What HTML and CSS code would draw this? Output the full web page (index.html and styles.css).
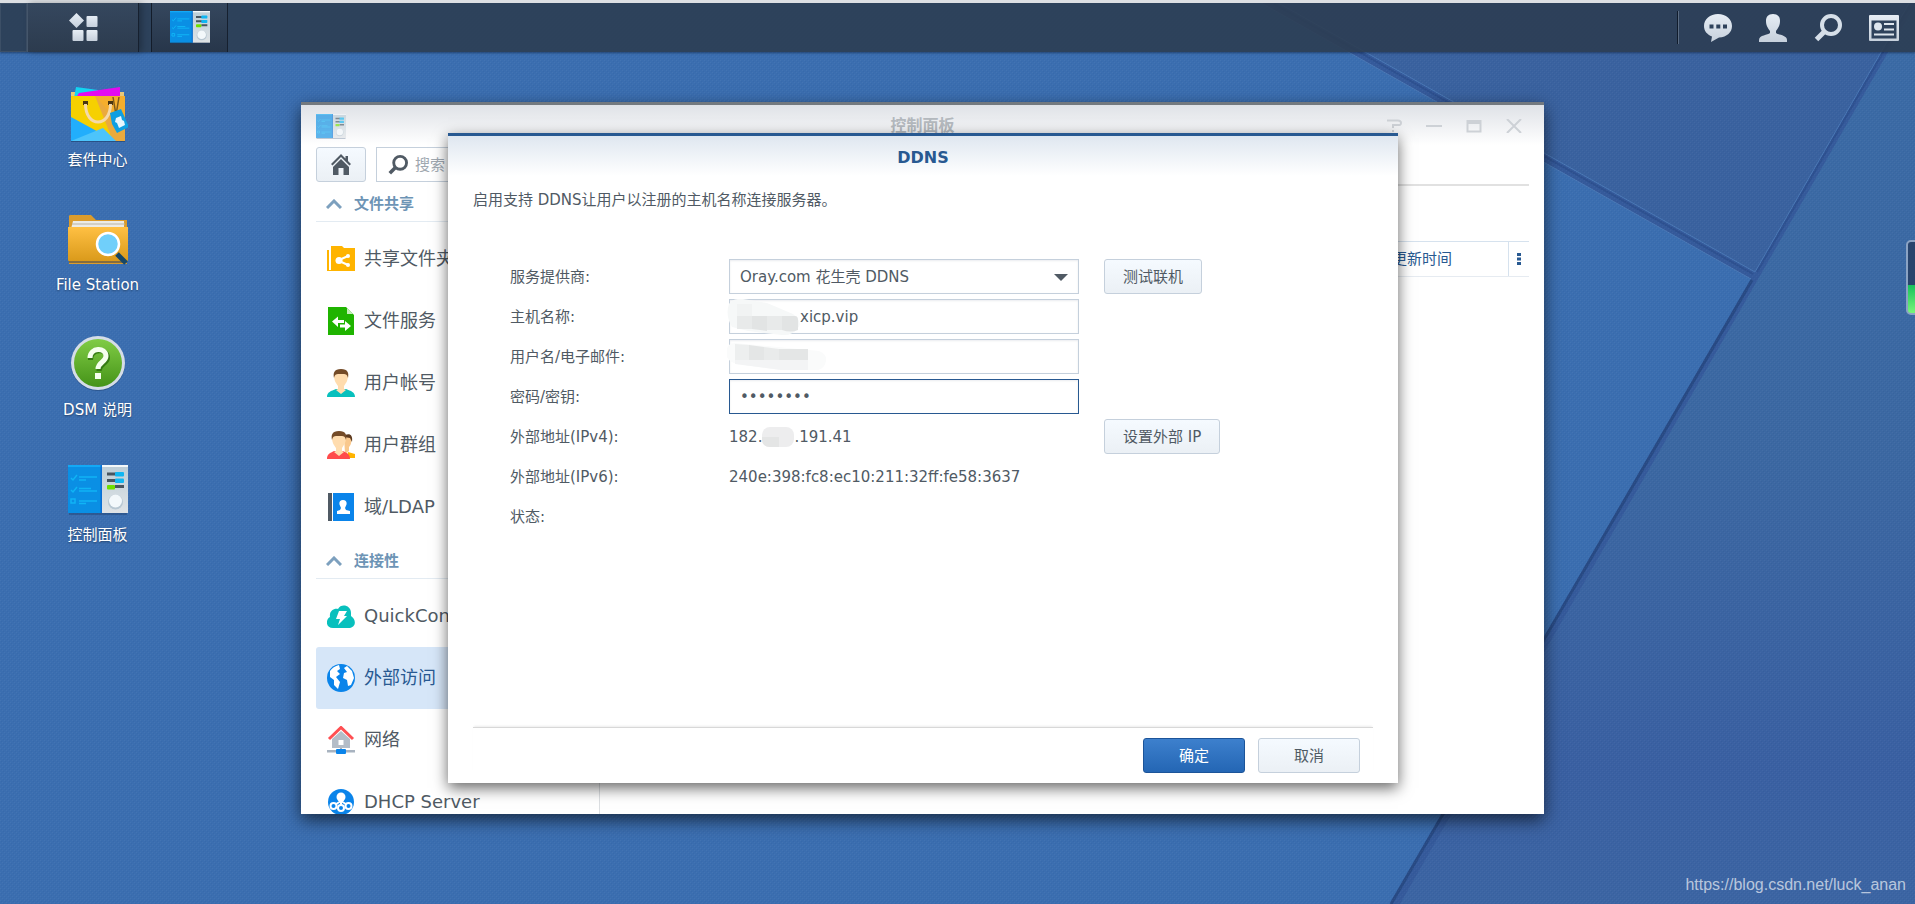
FILE: index.html
```
<!DOCTYPE html>
<html lang="zh-CN">
<head>
<meta charset="UTF-8">
<meta name="viewport" content="width=device-width, initial-scale=1.0">
<title>DDNS</title>
<link rel="stylesheet" href="styles.css">
</head>
<body>

<svg class="wallpaper" viewBox="0 0 1915 904" preserveAspectRatio="xMaxYMin slice" aria-hidden="true">
    <defs>
        <pattern id="weave" width="4" height="4" patternUnits="userSpaceOnUse">
            <path d="M0 0h1v1H0zM2 2h1v1H2z" fill="#fff" opacity=".04"/>
            <path d="M1 1h1v1H1zM3 3h1v1H3z" fill="#001c50" opacity=".06"/>
        </pattern>
        <linearGradient id="right" x1="0" y1="0" x2="0" y2="1">
            <stop offset="0" stop-color="#3b6ba6"/>
            <stop offset=".5" stop-color="#3c68a2"/>
            <stop offset=".85" stop-color="#3a60a2"/>
            <stop offset="1" stop-color="#3c65a3"/>
        </linearGradient>
    </defs>
    <rect width="1915" height="904" fill="#355a9b"/>
    <path d="M0 0H1256L1751 279L1390 904H0z" fill="#3b6eb0"/>
    <path d="M1273 0H1911L1755 272z" fill="#3a629f"/>
    <path d="M1918 0L1400 904H1915V0z" fill="url(#right)"/>
    <path d="M1256 0L1751 279M1273 0L1755 272L1911 0" fill="none" stroke="#4a78b5" stroke-width="1"/>
    <path d="M1277 0L1756 270" fill="none" stroke="#2e5190" stroke-width="2" transform="translate(-3,4)"/>
    <path d="M1752 280L1391 904" fill="none" stroke="#284a84" stroke-width="3"/>
    <path d="M1913 0L1757 272" fill="none" stroke="#2e5190" stroke-width="2"/>
    <rect width="1915" height="904" fill="url(#weave)"/>
</svg>

<!-- shared drawings -->
<svg class="defs" aria-hidden="true">
    <defs>
        <linearGradient id="panelGrey" x1="0" y1="0" x2="0" y2="1">
            <stop offset="0" stop-color="#bccdd7"/><stop offset="1" stop-color="#dfe3e6"/>
        </linearGradient>
        <linearGradient id="folderFront" x1="0" y1="0" x2="0" y2="1">
            <stop offset="0" stop-color="#ffc043"/><stop offset="1" stop-color="#da9a1b"/>
        </linearGradient>
        <linearGradient id="helpGreen" x1="0" y1="0" x2="0" y2="1">
            <stop offset="0" stop-color="#80cc45"/><stop offset="1" stop-color="#459318"/>
        </linearGradient>
        <linearGradient id="bar" x1="0" y1="0" x2="0" y2="1">
            <stop offset="0" stop-color="#e6edf5"/><stop offset="1" stop-color="#c6d0dc"/>
        </linearGradient>
        <symbol id="cpanel" viewBox="0 0 60 50">
            <path d="M1 48h58v2H1z" fill="#1b3a66" opacity=".4"/>
            <path d="M0 0h34v48H0z" fill="#0a8fe4"/>
            <path d="M0 0h34v2H0z" fill="#13a9f5"/>
            <path d="M34 0h26v48H34z" fill="url(#panelGrey)"/>
            <path d="M34 0h26v2H34z" fill="#f4f8fa"/>
            <path d="M32.500 0h1.500v48h-1.500z" fill="#0b6fd6"/>
            <path d="M3 13l2 2 4-5M3 25l2 2 4-5M3 34h4v4H3zM11 12h18M11 15h7M11 23.500h12M11 26h18M11 36h18M11 38.500h7" fill="none" stroke="#10b4f5" stroke-width="1.500"/>
            <path d="M39 7.500h9v3h-9zM39 14h9v3h-9zM47 20h9v3h-9z" fill="#485560"/>
            <rect x="47" y="7" width="9" height="4.500" rx="1" fill="#10b6f2"/>
            <rect x="47" y="13.500" width="9" height="4.500" rx="1" fill="#10b6f2"/>
            <rect x="39" y="20" width="8" height="4.500" rx="1" fill="#6fe000"/>
            <circle cx="47.500" cy="37" r="7.500" fill="#b8c7d2"/>
            <circle cx="47.500" cy="36" r="6.500" fill="#f3f8fb"/>
        </symbol>
        <symbol id="lens" viewBox="0 0 28 28">
            <circle cx="17" cy="11" r="9" fill="none" stroke="currentColor" stroke-width="4"/>
            <path d="M10 18l-7.500 7.500" stroke="currentColor" stroke-width="5"/>
        </symbol>
        <symbol id="up" viewBox="0 0 16 10">
            <path d="M1 9l7-7 7 7" fill="none" stroke="#7da0be" stroke-width="3"/>
        </symbol>
    </defs>
</svg>

<header class="taskbar">
    <div class="peek"></div>
    <button class="task menu" aria-label="主菜单">
        <svg width="29" height="29" viewBox="0 0 29 29" fill="url(#bar)">
            <path d="M7.500 0L15 7.500 7.500 15 0 7.500z"/>
            <rect x="17.500" y="3" width="11" height="11" rx="1"/>
            <rect x="3.500" y="17" width="11" height="11" rx="1"/>
            <rect x="17.500" y="17" width="11" height="11" rx="1"/>
        </svg>
    </button>
    <button class="task app" aria-label="控制面板">
        <svg width="40" height="33" viewBox="0 0 60 50" preserveAspectRatio="none"><use href="#cpanel"/></svg>
    </button>
    <div class="tray">
        <button aria-label="通知">
            <svg width="28" height="28" viewBox="0 0 28 28">
                <path d="M14 0C6 0 0 5 0 12c0 5 3 8.500 8 10.500L7 28l8-4.500c8-.5 13-5 13-11.500C28 5 22 0 14 0z" fill="url(#bar)"/>
                <path d="M5.500 10.500h4v4h-4zM12.300 10.500h4v4h-4zM19 10.500h4v4h-4z" fill="#2e425c"/>
            </svg>
        </button>
        <button aria-label="用户">
            <svg width="28" height="28" viewBox="0 0 28 28" fill="url(#bar)">
                <path d="M14 0c-5 0-7 3-7 7 0 5 2 7 4 10v2c-2 2-11 2-11 7v2h28v-2c0-5-9-5-11-7v-2c2-3 4-5 4-10 0-4-2-7-7-7z"/>
            </svg>
        </button>
        <button aria-label="搜索">
            <svg width="28" height="28"><use href="#lens"/></svg>
        </button>
        <button aria-label="小工具">
            <svg width="30" height="26" viewBox="0 0 30 26">
                <rect width="30" height="26" rx="1" fill="url(#bar)"/>
                <rect x="2.500" y="5.500" width="25" height="18" fill="#2e425c"/>
                <circle cx="9" cy="11.500" r="4" fill="#dde5ee"/>
                <path d="M15 9h10M15 14.500h10M5 19.500h20" stroke="#dde5ee" stroke-width="2"/>
            </svg>
        </button>
    </div>
</header>

<nav class="shortcuts">
    <a href="#">
        <svg width="60" height="60" viewBox="0 0 60 60">
            <path d="M3 8h53v4H3z" fill="#e9c878"/>
            <path d="M8 3l22 3v8H6z" fill="#12d4f2"/>
            <path d="M11 9l41-6v9H9z" fill="#e30bf0"/>
            <path d="M3 56h54v2H3z" fill="#17335c" opacity=".5"/>
            <path d="M3 12h54v45H3z" fill="#f6d000"/>
            <path d="M27 12h30v45z" fill="#f5ae2d"/>
            <path d="M27 12l18 45h12V45z" fill="#ebaa3d"/>
            <path d="M3 33l44 24H3z" fill="#22aefc"/>
            <path d="M3 57l32-13 13 13z" fill="#4cc4fb"/>
            <path d="M15 17h5v4h-5zM40 17h5v4h-5z" fill="#4a3511"/>
            <path d="M17.500 20c0 24 25 24 25 0" fill="none" stroke="#f5d9a9" stroke-width="3"/>
            <path d="M45 13l3 18 3-18" fill="none" stroke="#7d5a1a" stroke-width="1.500"/>
            <path d="M42 29l11-4 8 18-12 6-5-9z" fill="#0f9fe2"/>
            <path d="M48 34l5-2 1 4 2 1 1 4-6 3-2-5-2-1z" fill="#e8f6fd"/>
        </svg>
        <span>套件中心</span>
    </a>
    <a href="#">
        <svg width="60" height="60" viewBox="0 0 60 60">
            <path d="M1 55V7q0-1 2-1h20l5 5h31v44z" fill="#dc9c2b"/>
            <path d="M5 12h51v8H3z" fill="#ecebe6"/><path d="M4 15h53" stroke="#b9b3a3"/>
            <path d="M0 18h60v33q0 1-1 1H1q-1 0-1-1z" fill="url(#folderFront)"/>
            <path d="M1 52h58v2H1z" fill="#17335c" opacity=".45"/>
            <path d="M49 45l9 9" stroke="#164767" stroke-width="5"/>
            <circle cx="40" cy="35" r="11" fill="#70cffa" stroke="#fff" stroke-width="2.500"/>
        </svg>
        <span>File Station</span>
    </a>
    <a href="#">
        <svg width="60" height="60" viewBox="0 0 60 60">
            <circle cx="30" cy="30" r="27" fill="#17335c" opacity=".4"/>
            <circle cx="30" cy="29" r="27" fill="#d5dde8"/>
            <circle cx="30" cy="29" r="24" fill="url(#helpGreen)"/>
            <path d="M21.500 25c0-12 17-12 17-2.500 0 6.500-8.500 6-8.500 13.500" fill="none" stroke="#347a12" stroke-width="5" transform="translate(1,1)"/>
            <path d="M22 24c0-11 16-11 16-2 0 6-8 6-8 13" fill="none" stroke="#f5ffed" stroke-width="5"/>
            <path d="M27 39h6v6h-6z" fill="#f5ffed"/>
        </svg>
        <span>DSM 说明</span>
    </a>
    <a href="#">
        <svg width="60" height="60" viewBox="0 -6 60 60"><use href="#cpanel" width="60" height="50"/></svg>
        <span>控制面板</span>
    </a>
</nav>

<section class="window">
    <header class="titlebar">
        <svg class="title-icon" width="30" height="25" viewBox="0 0 60 50"><use href="#cpanel"/></svg>
        <h1>控制面板</h1>
        <div class="controls">
            <button aria-label="帮助"><svg width="16" height="14" viewBox="0 0 16 14"><path d="M1 1.500h11q3 0 3 2.500t-3 2H7v3M7 11v2" fill="none" stroke="currentColor" stroke-width="2"/></svg></button>
            <button aria-label="最小化"><svg width="16" height="14" viewBox="0 0 16 14"><path d="M0 7h16" stroke="currentColor" stroke-width="2"/></svg></button>
            <button aria-label="最大化"><svg width="16" height="14" viewBox="0 0 16 14"><path d="M1.500 2h13v10.500h-13z" fill="none" stroke="currentColor" stroke-width="2"/><path d="M1 3.500h14" stroke="currentColor" stroke-width="3"/></svg></button>
            <button aria-label="关闭"><svg width="16" height="14" viewBox="0 0 16 14"><path d="M1 0l14 14M15 0L1 14" stroke="currentColor" stroke-width="2"/></svg></button>
        </div>
    </header>

    <div class="window-body">
        <aside class="sidebar">
            <div class="tools">
                <button class="btn home" aria-label="主页">
                    <svg width="20" height="21" viewBox="0 0 20 21" fill="#505a64">
                        <path d="M10 0L0 10l1.500 1.500L10 3l8.500 8.500L20 10l-3-3V2h-2.500v2.500z"/>
                        <path d="M10 5l-8 8v8h5.500v-7h5v7H18v-8z"/>
                    </svg>
                </button>
                <label class="search">
                    <svg width="20" height="20"><use href="#lens"/></svg>
                    <input type="text" placeholder="搜索" aria-label="搜索">
                </label>
            </div>

            <h2><svg width="16" height="10"><use href="#up"/></svg>文件共享</h2>
            <ul>
                <li><a href="#">
                    <svg width="28" height="28" viewBox="0 0 28 28">
                        <path d="M0 5h2v20h2V1h11l2 2h11v23H0z" fill="#ffb400"/>
                        <path d="M21 11l-10 4.500 10 4.500" fill="none" stroke="#fff" stroke-width="2"/>
                        <circle cx="12" cy="15.500" r="3.500" fill="#fff"/><circle cx="21" cy="11" r="2" fill="#fff"/><circle cx="21" cy="20" r="2" fill="#fff"/>
                    </svg>共享文件夹</a></li>
                <li><a href="#">
                    <svg width="28" height="28" viewBox="0 0 28 28">
                        <path d="M1 0h18l8 8v20H1z" fill="#1fb400"/><path d="M20 1v6h6z" fill="#c4eeba"/>
                        <path d="M5 14.500l6-5v3.500h6v3h-6V20zM24 19l-6-5v3.500h-5v3h5V24z" fill="#fff"/>
                    </svg>文件服务</a></li>
                <li><a href="#">
                    <svg width="28" height="28" viewBox="0 0 28 28">
                        <path d="M0 28c0-5 4-6 9-8h10c5 2 9 3 9 8z" fill="#08c0bd"/>
                        <path d="M7 6c0-7 14-7 14 0 0 6-2 8-4 11v3l2 1-5 4-5-4 2-1v-3c-2-3-4-5-4-11z" fill="#ffdcae"/>
                        <path d="M7 9c-1-5 0-9 7-9s8 4 7 9c-1-4-2-4-7-4S8 5 7 9z" fill="#744b27"/>
                    </svg>用户帐号</a></li>
                <li><a href="#">
                    <svg width="28" height="28" viewBox="0 0 28 28">
                        <path d="M20 27l1-6 7 2v4z" fill="#ffb400"/>
                        <path d="M17 5h7c1 6 0 9-2 11v4l-4 3z" fill="#f9c88d"/>
                        <path d="M18 4c5-2 8 0 7 7l-2-4-6-1z" fill="#5d3b20"/>
                        <path d="M0 28c0-5 3-6 7-8h9c4 2 7 3 7 8z" fill="#ff4b4b"/>
                        <path d="M5 6c0-7 14-7 14 0 0 6-2 8-4 11v3l2 1-5 4-5-4 2-1v-3c-2-3-4-5-4-11z" fill="#ffdcae"/>
                        <path d="M5 9c-1-5 0-9 7-9s8 4 7 9c-1-4-2-4-7-4S6 5 5 9z" fill="#744b27"/>
                    </svg>用户群组</a></li>
                <li><a href="#">
                    <svg width="28" height="28" viewBox="0 0 28 28">
                        <path d="M1 0h4v28H1z" fill="#505a64"/><path d="M6 0h21v28H6z" fill="#0a84ea"/>
                        <path d="M16 7c-3 0-4 2-3.500 4.500L14 15l-1 2-3 1v3h13v-3l-4-1-1-2 1.500-3.500C20 9 19 7 16 7z" fill="#fff"/>
                    </svg>域/LDAP</a></li>
            </ul>

            <h2><svg width="16" height="10"><use href="#up"/></svg>连接性</h2>
            <ul>
                <li><a href="#">
                    <svg width="28" height="28" viewBox="0 0 28 28">
                        <path d="M6 26c-7 0-8-8-3-11-1-6 4-9 8-8 3-6 13-4 13 4 0 2 0 3 0 3 6 4 5 12-3 12z" fill="#08c0bd"/>
                        <path d="M12 9h8l-3 5h3L11 23l2-6H9z" fill="#fff"/>
                    </svg>QuickConnect</a></li>
                <li class="selected"><a href="#">
                    <svg width="28" height="28" viewBox="0 0 28 28">
                        <circle cx="14" cy="14" r="14" fill="#0a84ea"/>
                        <path d="M3 7c2-3 5-5 9-6l1 4-3 2 3 3-4 3 4 5-2 7-4-4v-5l-4-3zM17 4l3-2 5 5 2 7-3 7-3 1-1-6-4-2 1-5 3-1z" fill="#fff"/>
                    </svg>外部访问</a></li>
                <li><a href="#">
                    <svg width="28" height="28" viewBox="0 0 28 28">
                        <path d="M14 5l-9 8v9h18v-9zM11.500 14h5v5h-5z" fill="#b4bdc8" fill-rule="evenodd"/>
                        <path d="M2 13L14 1.500 26 13" fill="none" stroke="#ff4f52" stroke-width="3"/>
                        <path d="M0 24h28v2.500H0zM13 22h2v3h-2z" fill="#a8b3c0"/>
                        <rect x="9" y="23" width="10" height="5" rx="1" fill="#0a84ea"/>
                    </svg>网络</a></li>
                <li><a href="#">
                    <svg width="28" height="28" viewBox="0 0 28 28">
                        <circle cx="14" cy="14" r="13" fill="#0a84ea"/>
                        <path d="M14 9v12M14 13L6 18M14 13l8 5" stroke="#fff" stroke-width="2"/>
                        <circle cx="14" cy="9" r="4.500" fill="#fff"/>
                        <g fill="#0a84ea" stroke="#fff" stroke-width="2"><circle cx="6.500" cy="18" r="3"/><circle cx="21.500" cy="18" r="3"/><circle cx="14" cy="20" r="3"/></g>
                    </svg>DHCP Server</a></li>
            </ul>
        </aside>

        <main class="content">
            <table>
                <tr>
                    <th class="spacer"></th>
                    <th class="updated">更新时间</th>
                    <th class="more"><button aria-label="更多"><svg width="4" height="12" viewBox="0 0 4 12" fill="#285991"><path d="M0 0h4v3H0zM0 4.500h4v3H0zM0 9h4v3H0z"/></svg></button></th>
                </tr>
            </table>
        </main>
    </div>

    <form class="dialog" onsubmit="return false">
        <h2 class="dialog-title">DDNS</h2>
        <p class="intro">启用支持 DDNS让用户以注册的主机名称连接服务器。</p>
        <div class="fields">
            <label for="provider">服务提供商:</label>
            <div class="field">
                <select id="provider"><option>Oray.com 花生壳 DDNS</option></select>
                <svg class="arrow" width="14" height="7" viewBox="0 0 14 7"><path d="M0 0h14L7 7z" fill="#505a64"/></svg>
            </div>
            <button type="button" class="btn">测试联机</button>

            <label for="host">主机名称:</label>
            <div class="field">
                <input type="text" id="host" class="masked" value="xicp.vip">
                <svg class="smudge" width="76" height="37" viewBox="0 0 76 37">
                    <path d="M2 5q4-6 14-5l24 4 26 11q10 8 5 14-6 8-16 7l-34-4-16-4Q-2 16 2 5z" fill="#f6f8f8"/>
                    <path d="M10 5h15v12H10z" fill="#f1f3f3"/>
                    <path d="M10 17h15v13H10z" fill="#e8eaea"/>
                    <path d="M25 17h15v15l-15-2z" fill="#e2e4e4"/>
                    <path d="M40 17h15v14H40z" fill="#e8eaea"/>
                    <path d="M55 17h13q3 0 3 4v10q-7 3-16 0z" fill="#e2e4e4"/>
                </svg>
            </div>
            <span></span>

            <label for="user">用户名/电子邮件:</label>
            <div class="field">
                <input type="text" id="user">
                <svg class="smudge" width="100" height="37" viewBox="0 0 100 37">
                    <path d="M0 12q0-8 8-8l84 8q8 3 7 10t-8 9H54L10 25Q2 23 0 18z" fill="#fafbfb"/>
                    <path d="M8 5l14 1v15H8z" fill="#edefef"/>
                    <path d="M22 6l15 2v13H22z" fill="#e4e6e6"/>
                    <path d="M37 8l15 2v11H37z" fill="#e9ebeb"/>
                    <path d="M52 10h29v11H52z" fill="#e4e6e6"/>
                    <path d="M8 21h73v10H54L8 25z" fill="#f3f4f5"/>
                </svg>
            </div>
            <span></span>

            <label for="password">密码/密钥:</label>
            <div class="field"><input type="password" id="password" class="active" value="password"></div>
            <span></span>

            <span>外部地址(IPv4):</span>
            <span class="value">182.<svg width="32" height="20" viewBox="0 0 32 20"><rect width="32" height="20" rx="8" fill="#ededee"/><path d="M0 10h17v10H8q-8 0-8-8z" fill="#e4e5e5"/></svg>.191.41</span>
            <button type="button" class="btn">设置外部 IP</button>

            <span>外部地址(IPv6):</span>
            <span class="value">240e:398:fc8:ec10:211:32ff:fe58:3637</span>
            <span></span>

            <span>状态:</span>
        </div>
        <footer class="actions">
            <button type="submit" class="btn primary">确定</button>
            <button type="button" class="btn">取消</button>
        </footer>
    </form>
</section>

<div class="gauge"></div>
<div class="credit">https://blog.csdn.net/luck_anan</div>

</body>
</html>
```
FILE: styles.css
```
* {
    box-sizing: border-box;
}
body {
    margin: 0;
    min-height: 100vh;
    overflow: hidden;
    background-color: #3b6eb0;
    color: #505a64;
    font-family: "DejaVu Sans", "Noto Sans CJK SC", sans-serif;
    font-size: 15px;
    line-height: 20px;
}
button, input, select {
    font: inherit;
    color: inherit;
}
button {
    padding: 0;
    border: none;
    background: none;
    cursor: pointer;
}
a {
    color: inherit;
    text-decoration: none;
}
svg {
    display: block;
    flex: none;
}
h1, h2, p, ul {
    margin: 0;
    padding: 0;
}
ul {
    list-style: none;
}
.wallpaper {
    position: absolute;
    top: 0;
    left: 0;
    width: 100%;
    height: 100%;
}
.defs {
    position: absolute;
    width: 0;
    height: 0;
}

/* taskbar */
.taskbar {
    position: relative;
    display: flex;
    height: 52px;
    border-top: 3px solid #dcdfe3;
    background-color: rgba(44, 61, 82, 0.9);
    box-shadow: 0 1px 2px rgba(10, 25, 50, 0.5);
}
.peek {
    width: 27px;
    border: 1px solid #3c4f66;
}
.task {
    display: flex;
    align-items: center;
    justify-content: center;
    border-left: 1px solid #45566b;
    border-right: 1px solid #16202f;
    background: linear-gradient(#35475e, #27364a);
}
.menu {
    width: 112px;
    margin-right: 12px;
    background: linear-gradient(#35475e, #2c3b4e);
    box-shadow: 3px 0 6px rgba(0, 0, 0, 0.25);
}
.app {
    width: 77px;
    border-left-color: #131c2a;
}
.tray {
    display: flex;
    align-items: center;
    gap: 27px;
    margin: 8px 0 8px auto;
    padding: 0 16px 0 26px;
    border-left: 1px solid #111c2c;
    box-shadow: inset 1px 0 0 #5b6c82;
    color: #d6dfe9;
}

/* desktop shortcuts */
.shortcuts {
    position: relative;
    display: flex;
    flex-direction: column;
    gap: 39px;
    width: 195px;
    padding-top: 32px;
    color: #fff;
    text-shadow: 0 1px 2px rgba(0, 0, 0, 0.4);
}
.shortcuts a {
    display: flex;
    flex-direction: column;
    align-items: center;
    gap: 6px;
}

/* control panel window */
.window {
    position: absolute;
    top: 102px;
    right: 371px;
    bottom: 90px;
    left: 301px;
    display: flex;
    flex-direction: column;
    border-top: 3px solid #73797f;
    background: linear-gradient(#dfe2e7, #fff 40px);
    box-shadow: 0 6px 16px rgba(0, 0, 0, 0.6);
}
.titlebar {
    display: flex;
    align-items: center;
    height: 42px;
    padding: 0 22px 0 15px;
}
.title-icon {
    opacity: 0.65;
}
.titlebar h1 {
    flex: 1;
    padding-left: 113px;
    color: #b4b9be;
    font-size: 16px;
    text-align: center;
}
.controls {
    display: flex;
    gap: 24px;
    color: #cdd1d6;
}
.window-body {
    display: flex;
    flex: 1;
    min-height: 0;
}
.sidebar {
    width: 299px;
    overflow: hidden;
    padding: 0 15px;
    border-right: 1px solid #dcdfe2;
}
.tools {
    display: flex;
    gap: 10px;
}
.btn {
    height: 35px;
    padding: 0 18px;
    border: 1px solid #c5d0dc;
    border-radius: 3px;
    background: linear-gradient(#f5faff, #ebf0f5);
}
.home {
    display: flex;
    align-items: center;
    justify-content: center;
    width: 50px;
}
.search {
    display: flex;
    flex: 1;
    align-items: center;
    gap: 7px;
    height: 35px;
    padding-left: 11px;
    border: 1px solid #c5d0dc;
}
.search input {
    flex: 1;
    min-width: 0;
    padding: 0;
    border: none;
    background: none;
}
.search input::placeholder {
    color: #a0a8b0;
    opacity: 1;
}
.sidebar h2 {
    display: flex;
    align-items: center;
    gap: 12px;
    height: 40px;
    margin-bottom: 6px;
    padding: 4px 0 0 10px;
    border-bottom: 1px solid #e3ebf2;
    color: #6d94b5;
    font-size: 15px;
}
.sidebar ul + h2 {
    margin-top: 1px;
}
.sidebar li a {
    display: flex;
    align-items: center;
    gap: 9px;
    height: 62px;
    padding-left: 11px;
    border-radius: 3px;
    font-size: 18px;
    white-space: nowrap;
}
.sidebar .selected a {
    background-color: #d6e6f8;
    color: #285991;
}
.content {
    flex: 1;
    margin: 37px 15px 0;
    padding-top: 55px;
    border-top: 2px solid #e1e1e1;
}
.content table {
    width: 100%;
    border-collapse: collapse;
    color: #285991;
}
.content th {
    height: 35px;
    padding: 0;
    border-top: 1px solid #d6e2ee;
    border-bottom: 1px solid #e6ebf1;
    font-weight: normal;
    text-align: left;
}
.content .updated {
    width: 116px;
}
.content .more {
    width: 21px;
    border-left: 1px solid #d6e2ee;
}
.more button {
    display: block;
    margin: 0 auto;
}

/* DDNS dialog */
.dialog {
    position: absolute;
    top: 28px;
    right: 146px;
    bottom: 31px;
    left: 147px;
    display: flex;
    flex-direction: column;
    padding: 0 25px 10px;
    border-top: 3px solid #285991;
    background: linear-gradient(#dfe7f0, #fff 40px);
    box-shadow: 0 5px 14px rgba(0, 0, 0, 0.6);
}
.dialog-title {
    padding: 12px 0 11px;
    color: #285991;
    font-size: 16px;
    text-align: center;
}
.intro {
    padding: 11px 0 49px;
}
.fields {
    display: grid;
    grid-template-columns: 219px 350px auto;
    grid-auto-rows: 35px;
    gap: 5px 0;
    align-items: center;
    justify-content: start;
    padding-left: 37px;
}
.fields .btn {
    justify-self: start;
    margin-left: 25px;
}
.field {
    position: relative;
}
.field input, .field select {
    display: block;
    width: 100%;
    height: 35px;
    padding: 0 10px;
    border: 1px solid #c5d0dc;
    border-radius: 0;
    background-color: #fff;
    box-shadow: inset 0 1px 2px rgba(80, 100, 120, 0.12);
    outline: none;
    appearance: none;
}
.field .masked {
    padding-left: 70px;
}
.field .active {
    border-color: #285991;
}
.arrow {
    position: absolute;
    top: 15px;
    right: 11px;
    pointer-events: none;
}
.smudge {
    position: absolute;
    top: 0;
    left: -2px;
    pointer-events: none;
}
.value {
    display: flex;
    align-items: center;
}
.actions {
    display: flex;
    justify-content: flex-end;
    gap: 13px;
    margin-top: auto;
    padding: 10px 13px 0 0;
    border-top: 1px solid #d8d8d8;
    box-shadow: 0 -2px 2px -1px #ececec;
}
.actions .btn {
    width: 102px;
}
.actions .primary {
    border-color: #1c5499;
    background: linear-gradient(#3d80cd, #2466b4);
    color: #fff;
}

/* meter docked at the screen edge */
.gauge {
    position: absolute;
    top: 240px;
    right: -10px;
    width: 19px;
    height: 75px;
    border: 2px solid #8ba3c4;
    border-radius: 5px;
    background: linear-gradient(#28446d 60%, #16c05c 60%, #78f57a);
}
.credit {
    position: absolute;
    right: 9px;
    bottom: 9px;
    color: rgba(255, 255, 255, 0.65);
    font-family: "Liberation Sans", sans-serif;
    font-size: 16px;
}
```
